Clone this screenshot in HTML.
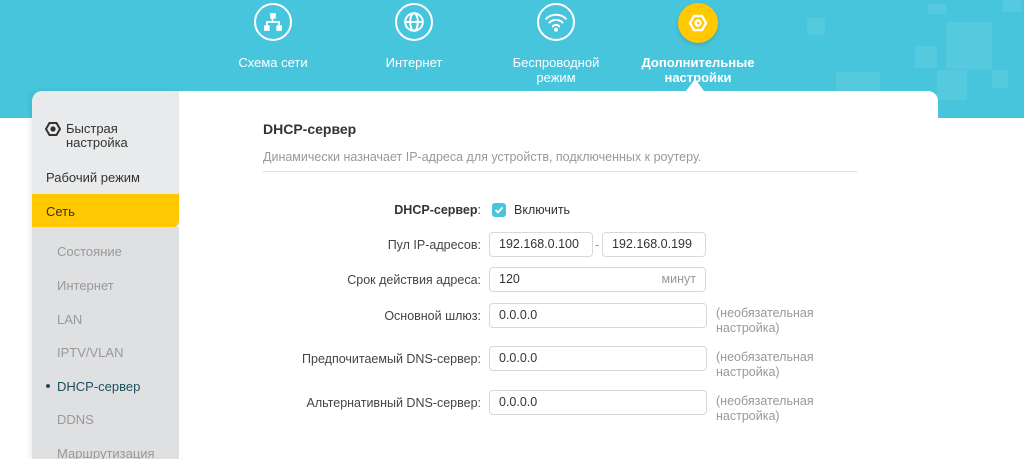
<!DOCTYPE html>
<html><head><meta charset="utf-8"><style>
*{margin:0;padding:0;box-sizing:border-box}
html,body{width:1024px;height:459px;overflow:hidden}
body{background:#fff;font-family:"Liberation Sans",sans-serif;position:relative;font-size:13px;color:#333}
.band{position:absolute;left:0;top:0;width:1024px;height:118px;background:#47c5dc}
.sq{position:absolute;background:rgba(255,255,255,.08)}
.nav{position:absolute;top:0;text-align:center;color:#fff;font-size:13px;line-height:15px}
.circ{width:38px;height:38px;border:2px solid #fff;border-radius:50%;margin:3px auto 14px;display:flex;align-items:center;justify-content:center}
.side{position:absolute;left:32px;top:91px;width:147px;height:368px;background:#e9eaeb;border-radius:10px 0 0 0;box-shadow:-2px 0 6px rgba(0,0,0,.08)}
.sub{position:absolute;left:0;top:136px;width:147px;height:240px;background:#dfe0e2}
.side .i{position:absolute;left:14px;font-size:13px;color:#333}
.side .s{position:absolute;left:25px;font-size:13px;color:#999}
.main{position:absolute;left:179px;top:91px;width:759px;height:368px;background:#fff;border-radius:0 10px 0 0}
.lbl{position:absolute;right:calc(1024px - 481px);font-size:12.5px;color:#444;text-align:right;white-space:nowrap}
.inp{position:absolute;border:1px solid #d8d8d8;border-radius:4px;height:25px;padding-left:9px;line-height:23px;font-size:12.5px;color:#333}
.opt{position:absolute;left:716px;font-size:12.5px;color:#999;line-height:15px}
</style></head><body>
<div class="band">
<div class="sq" style="left:807px;top:18px;width:18px;height:17px"></div>
<div class="sq" style="left:928px;top:4px;width:18px;height:10px"></div>
<div class="sq" style="left:946px;top:22px;width:46px;height:47px"></div>
<div class="sq" style="left:915px;top:46px;width:22px;height:22px"></div>
<div class="sq" style="left:937px;top:70px;width:30px;height:30px"></div>
<div class="sq" style="left:836px;top:72px;width:44px;height:46px"></div>
<div class="sq" style="left:992px;top:70px;width:16px;height:18px"></div>
<div class="sq" style="left:1003px;top:0;width:18px;height:12px"></div>
</div>
<div class="nav" style="left:221px;width:104px"><div class="circ"><svg width="20" height="20" viewBox="0 0 18 18" fill="#fff"><rect x="6.5" y="1" width="5" height="5"/><rect x="1" y="12" width="5" height="5"/><rect x="12" y="12" width="5" height="5"/><path d="M8.5 6v3M3.5 12V9h11v3" stroke="#fff" stroke-width="1.6" fill="none"/></svg></div>Схема сети</div>
<div class="nav" style="left:362px;width:104px"><div class="circ"><svg width="22" height="22" viewBox="0 0 20 20" fill="none" stroke="#fff" stroke-width="1.8"><circle cx="10" cy="10" r="8"/><ellipse cx="10" cy="10" rx="3.5" ry="8"/><path d="M2 10h16"/></svg></div>Интернет</div>
<div class="nav" style="left:501px;width:110px"><div class="circ"><svg width="24" height="22" viewBox="0 0 22 20" fill="none" stroke="#fff" stroke-width="1.8" stroke-linecap="round"><path d="M2 7a13 13 0 0 1 18 0M5 10.5a8.5 8.5 0 0 1 12 0M8 14a4 4 0 0 1 6 0"/><circle cx="11" cy="17" r="1" fill="#fff"/></svg></div>Беспроводной<br>режим</div>
<div class="nav" style="left:636px;width:124px;font-weight:bold"><div class="circ" style="background:#ffc800;border-color:#ffc800;width:40px;height:40px;margin:3px auto 12px;box-shadow:0 2px 4px rgba(0,0,0,.15)"><svg width="20" height="20" viewBox="0 0 20 20" fill="none" stroke="#fff" stroke-width="2.4"><path d="M6 3h8l4 7-4 7H6l-4-7z"/><circle cx="10" cy="10" r="2.5"/></svg></div>Дополнительные<br>настройки</div>
<div style="position:absolute;left:686px;top:79px;width:0;height:0;border-left:9px solid transparent;border-right:9px solid transparent;border-bottom:12px solid #fff"></div>
<div class="side">
<svg style="position:absolute;left:13px;top:31px" width="16" height="14" viewBox="0 0 16 14" fill="none" stroke="#333" stroke-width="2"><path d="M4.5 1h7L15 7l-3.5 6h-7L1 7z"/><circle cx="8" cy="7" r="1.6" fill="#333"/></svg>
<div class="i" style="left:34px;top:31px;line-height:14px">Быстрая<br>настройка</div>
<div class="i" style="top:79px">Рабочий режим</div>
<div style="position:absolute;left:0;top:103px;width:147px;height:34px;background:#ffc800;border-radius:0 0 8px 0"></div>
<div class="i" style="top:113px">Сеть</div>
<div class="sub"></div>
<div class="s" style="top:153px">Состояние</div>
<div class="s" style="top:187px">Интернет</div>
<div class="s" style="top:221px">LAN</div>
<div class="s" style="top:254px">IPTV/VLAN</div>
<div style="position:absolute;left:14px;top:293px;width:4px;height:4px;border-radius:50%;background:#1e4f5e"></div>
<div class="s" style="top:288px;color:#1e4f5e">DHCP-сервер</div>
<div class="s" style="top:321px">DDNS</div>
<div class="s" style="top:355px">Маршрутизация</div>
</div>
<div class="main"></div>
<div style="position:absolute;left:263px;top:121px;font-size:14px;font-weight:bold;color:#333">DHCP-сервер</div>
<div style="position:absolute;left:263px;top:150px;font-size:12.5px;color:#999">Динамически назначает IP-адреса для устройств, подключенных к роутеру.</div>
<div style="position:absolute;left:263px;top:171px;width:594px;height:1px;background:#ddd"></div>
<div class="lbl" style="top:203px"><b style="color:#333">DHCP-сервер</b>:</div>
<div style="position:absolute;left:492px;top:203px;width:14px;height:14px;border-radius:3px;background:#47c5dc"><svg width="14" height="14" viewBox="0 0 14 14"><path d="M3.5 7l2.5 2.5 4.5-5" stroke="#fff" stroke-width="1.8" fill="none"/></svg></div>
<div style="position:absolute;left:514px;top:203px;font-size:12.5px;color:#333">Включить</div>
<div class="lbl" style="top:238px">Пул IP-адресов:</div>
<div class="inp" style="left:489px;top:232px;width:104px">192.168.0.100</div>
<div style="position:absolute;left:595px;top:237px;color:#999">-</div>
<div class="inp" style="left:602px;top:232px;width:104px">192.168.0.199</div>
<div class="lbl" style="top:273px">Срок действия адреса:</div>
<div class="inp" style="left:489px;top:267px;width:217px">120<span style="position:absolute;right:9px;color:#999">минут</span></div>
<div class="lbl" style="top:309px">Основной шлюз:</div>
<div class="inp" style="left:489px;top:303px;width:218px">0.0.0.0</div>
<div class="opt" style="top:306px">(необязательная<br>настройка)</div>
<div class="lbl" style="top:352px">Предпочитаемый DNS-сервер:</div>
<div class="inp" style="left:489px;top:346px;width:218px">0.0.0.0</div>
<div class="opt" style="top:350px">(необязательная<br>настройка)</div>
<div class="lbl" style="top:396px">Альтернативный DNS-сервер:</div>
<div class="inp" style="left:489px;top:390px;width:218px">0.0.0.0</div>
<div class="opt" style="top:394px">(необязательная<br>настройка)</div>
</body></html>
